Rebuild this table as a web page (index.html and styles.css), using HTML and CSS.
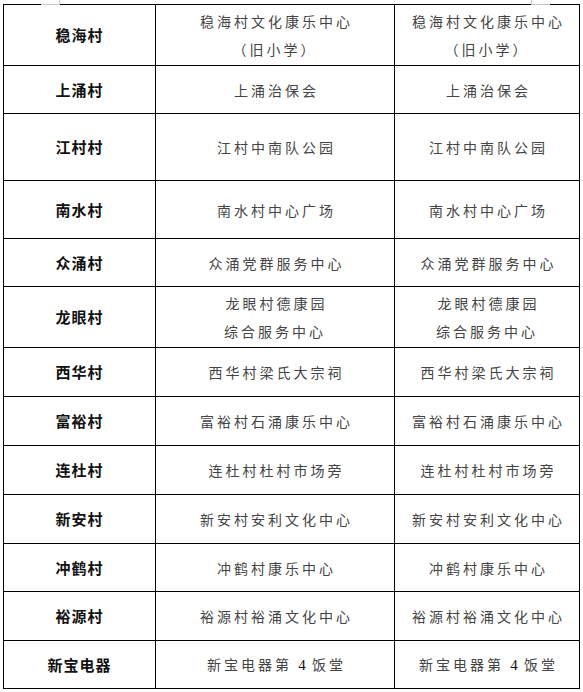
FILE: index.html
```html
<!DOCTYPE html>
<html lang="zh-CN">
<head>
<meta charset="utf-8">
<title>表格</title>
<link rel="stylesheet" href="styles.css">
</head>
<body>
<div class="page">
  <span class="mark mark-tl"></span>
  <span class="mark mark-tr"></span>
  <table class="sites">
    <colgroup>
      <col class="c1"><col class="c2"><col class="c3">
    </colgroup>
    <tbody>
      <tr class="h61"><th>稳海村</th><td>稳海村文化康乐中心<br>（旧小学）</td><td>稳海村文化康乐中心<br>（旧小学）</td></tr>
      <tr class="h48"><th>上涌村</th><td>上涌治保会</td><td>上涌治保会</td></tr>
      <tr class="h67"><th>江村村</th><td>江村中南队公园</td><td>江村中南队公园</td></tr>
      <tr class="h58"><th>南水村</th><td>南水村中心广场</td><td>南水村中心广场</td></tr>
      <tr class="h48"><th>众涌村</th><td>众涌党群服务中心</td><td>众涌党群服务中心</td></tr>
      <tr class="h61"><th>龙眼村</th><td>龙眼村德康园<br>综合服务中心</td><td>龙眼村德康园<br>综合服务中心</td></tr>
      <tr class="h49"><th>西华村</th><td>西华村梁氏大宗祠</td><td>西华村梁氏大宗祠</td></tr>
      <tr class="h49"><th>富裕村</th><td>富裕村石涌康乐中心</td><td>富裕村石涌康乐中心</td></tr>
      <tr class="h49"><th>连杜村</th><td>连杜村杜村市场旁</td><td>连杜村杜村市场旁</td></tr>
      <tr class="h49"><th>新安村</th><td>新安村安利文化中心</td><td>新安村安利文化中心</td></tr>
      <tr class="h48"><th>冲鹤村</th><td>冲鹤村康乐中心</td><td>冲鹤村康乐中心</td></tr>
      <tr class="h49"><th>裕源村</th><td>裕源村裕涌文化中心</td><td>裕源村裕涌文化中心</td></tr>
      <tr class="h48"><th>新宝电器</th><td>新宝电器第 <span class="num">4</span> 饭堂</td><td>新宝电器第 <span class="num">4</span> 饭堂</td></tr>
    </tbody>
  </table>
</div>
</body>
</html>
```

FILE: styles.css
```css
html, body {
  margin: 0;
  padding: 0;
  background: #ffffff;
}

.page {
  position: relative;
  width: 583px;
  height: 692px;
  overflow: hidden;
  padding: 4px 0 0 3px;
  box-sizing: border-box;
}

.mark {
  position: absolute;
  border-color: #c8c8c8;
  border-style: solid;
  width: 18px;
  height: 4px;
}

.mark-tl {
  left: 41px;
  top: 0;
  border-width: 0 1px 1px 0;
}

.mark-tr {
  left: 531px;
  top: 0;
  border-width: 0 0 1px 1px;
}

.sites {
  border-collapse: collapse;
  table-layout: fixed;
  width: 576px;
  font-family: "Noto Sans CJK SC", "Noto Sans", sans-serif;
}

.c1 { width: 152px; }
.c2 { width: 239px; }
.c3 { width: 185px; }

.sites th,
.sites td {
  border: 1px solid #000000;
  text-align: center;
  vertical-align: middle;
  padding: 0;
}

.sites th {
  font-size: 15px;
  font-weight: 700;
  color: #111111;
  letter-spacing: 1px;
  line-height: 20px;
}

.sites td {
  font-size: 14px;
  font-weight: 400;
  color: #444444;
  letter-spacing: 3px;
  line-height: 28px;
  text-indent: 3px;
}

.num {
  font-family: "Liberation Serif", serif;
  font-size: 15px;
  color: #111111;
  letter-spacing: 0;
}

.h48 { height: 48px; }
.h49 { height: 49px; }
.h58 { height: 58px; }
.h61 { height: 61px; }
.h67 { height: 67px; }
```
